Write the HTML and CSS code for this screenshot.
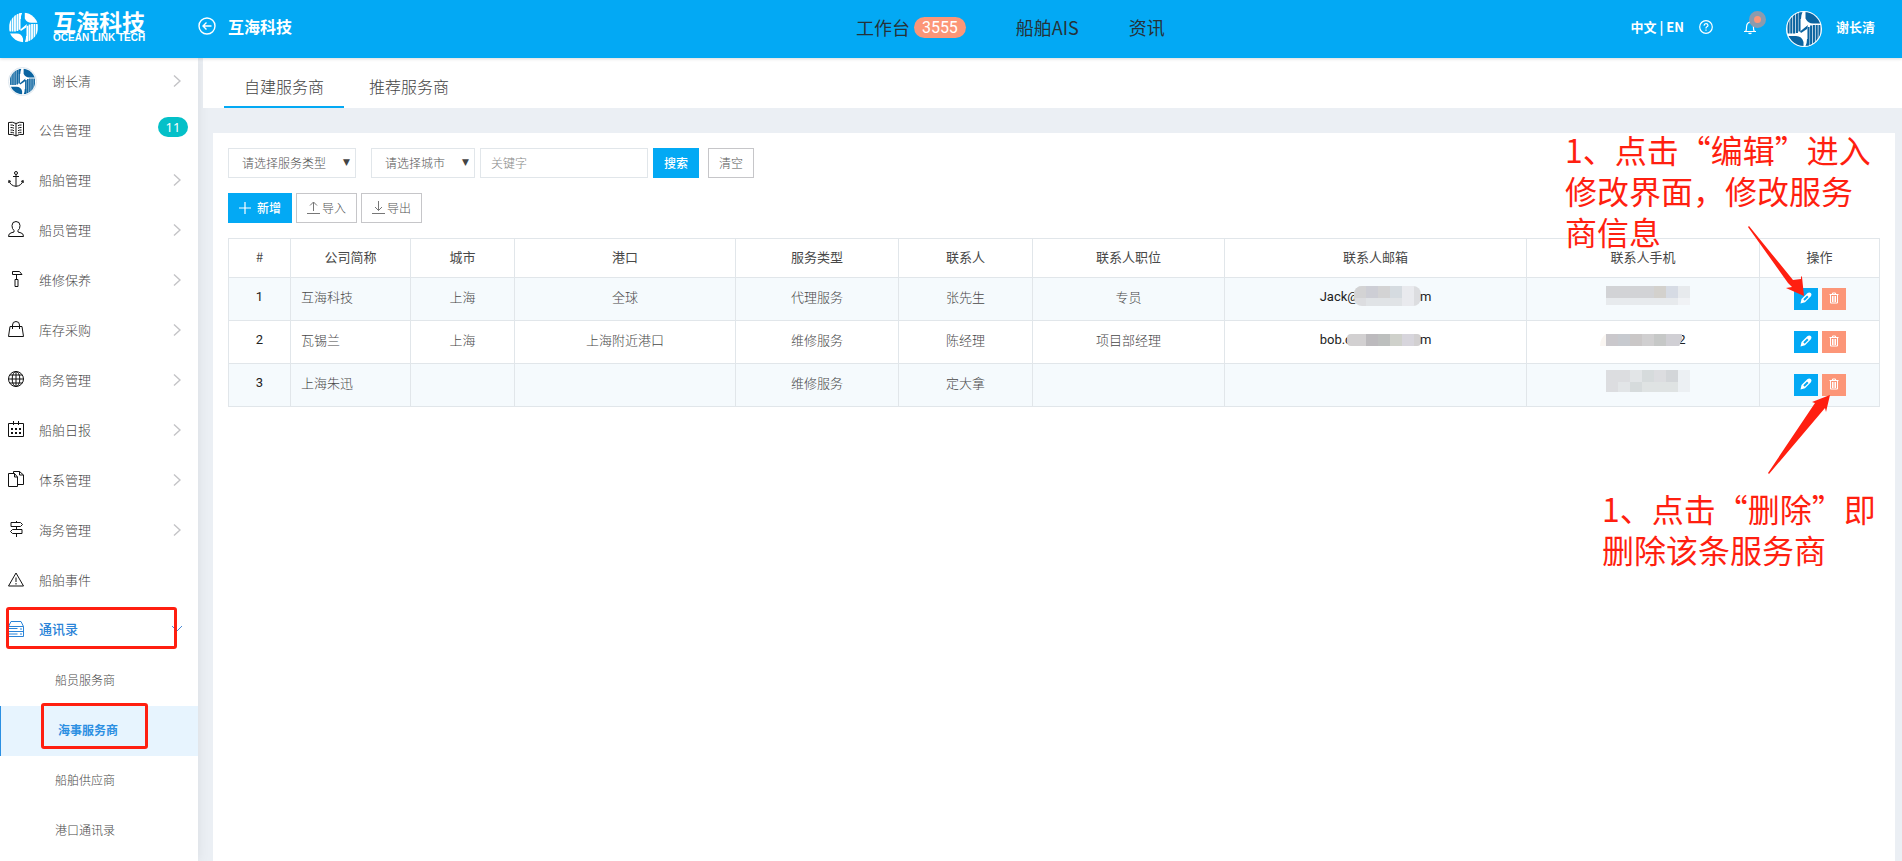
FILE: index.html
```html
<!DOCTYPE html>
<html lang="zh-CN">
<head>
<meta charset="utf-8">
<title>互海科技</title>
<link rel="stylesheet" href="styles.css">
</head>
<body>
<svg class="defs" aria-hidden="true">
  <defs>
    <clipPath id="disc"><circle cx="18" cy="18" r="17"/></clipPath>
    <symbol id="logo" viewBox="0 0 36 36">
      <g clip-path="url(#disc)">
        <path fill="currentColor" d="M19.500 0h17v12.500H27q-5 0-7.500-5zM0 25h10q6 0 7.500 6v5H0z"/>
        <path fill="none" stroke="currentColor" stroke-width="2.100" d="M2.500 8v14.500M5.300 5v17.500M8.100 3v19.500M10.900 2v20M13.500 1.500v19M33.500 14v14M30.700 14v17M27.900 14v19M25.100 14.500v20M22.500 16v19"/>
        <path fill="currentColor" d="M14 20.500l8-6.500-1 4-6 4zM13 1h3.500q-1.500 3-1.500 7h-2zM23 35h-3.500q1.500-3 1.500-7h2z"/>
      </g>
    </symbol>
    <symbol id="chev" viewBox="0 0 8 14"><path d="M1 1.500l6 5.500-6 5.500" fill="none" stroke="#c3c3c6" stroke-width="1.400"/></symbol>
    <symbol id="pencil" viewBox="0 0 12 12"><path fill="#fff" fill-rule="evenodd" d="M.5 11.500l1-4.500L7.300 1.200q2-1.500 3.400-.2t.2 3.200L5 10.300zM3.300 7.300l1.400 1.400L8.500 5 7.100 3.500z"/></symbol>
    <symbol id="trash" viewBox="0 0 12 12"><path fill="none" stroke="#fff" stroke-width="1" d="M1.500 2.500h9M4.500 2.500v-1.500h3v1.500M2.500 2.500v8.500h7v-8.500M4.500 4v6M6 4v6M7.500 4v6"/></symbol>
  </defs>
</svg>

<header class="topbar">
  <div class="brand">
    <svg class="brand-mark"><use href="#logo"/></svg>
    <div class="brand-words"><span class="brand-cn">互海科技</span><span class="brand-en">OCEAN LINK TECH</span></div>
  </div>
  <a class="back" href="#">
    <svg width="18" height="18" viewBox="0 0 18 18" fill="none" stroke="#fff" stroke-width="1.400"><circle cx="9" cy="9" r="8"/><path d="M13.500 9H5M8.500 5.500L5 9l3.500 3.500"/></svg>
    互海科技
  </a>
  <nav class="topnav">
    <a href="#">工作台<span class="count">3555</span></a>
    <a href="#">船舶AIS</a>
    <a href="#">资讯</a>
  </nav>
  <div class="account">
    <a class="lang" href="#">中文 | EN</a>
    <a class="help" href="#" aria-label="帮助"><svg width="14" height="14" viewBox="0 0 14 14" fill="none" stroke="#fff" stroke-width="1.200"><circle cx="7" cy="7" r="6.300"/><path d="M5 5.600q.2-2 2-2t2 1.700q0 1-1.100 1.500T7 8.500M7 9.600v1.200"/></svg></a>
    <a class="bell" href="#" aria-label="通知"><svg width="12" height="15" viewBox="0 0 12 15" fill="none" stroke="#fff" stroke-width="1.200"><path d="M0 11.500h12M1.700 11.300q.9-1 .9-5Q3 2.300 6 2.300t3.400 4q0 4 .9 5M6 1v1.300M4.500 13q1.500 1.300 3 0"/></svg><span class="pulse"></span></a>
    <svg class="avatar avatar-lg"><use href="#logo"/></svg>
    <span class="me">谢长清</span>
  </div>
</header>

<div class="shell">
  <aside class="side">
    <a class="item user" href="#"><svg class="avatar avatar-sm"><use href="#logo"/></svg><span>谢长清</span><svg class="chev"><use href="#chev"/></svg></a>
    <a class="item" href="#"><svg class="ico" viewBox="0 0 16 16"><path d="M8 2.500Q4.500.5.500 1.500v12q4-1 7.500 1.500 3.500-2.500 7.500-1.500v-12Q11.500.5 8 2.500zV15M2.500 4q2-.2 3.500.7M2.500 6.500q2-.2 3.500.7M2.500 9q2-.2 3.500.7M2.500 11.300q2-.2 3.500.7M13.500 4q-2-.2-3.500.7M13.500 6.500q-2-.2-3.500.7M13.500 9q-2-.2-3.500.7M13.500 11.300q-2-.2-3.500.7"/></svg><span>公告管理</span><b class="badge">11</b></a>
    <a class="item" href="#"><svg class="ico" viewBox="0 0 16 16"><circle cx="8" cy="2" r="1.500"/><path d="M8 3.500v12M5 5.500h6M.8 12V9.500l2.200 1M15.200 12V9.500l-2.200 1M1 9.800q1.500 5 7 5.500 5.500-.5 7-5.500"/></svg><span>船舶管理</span><svg class="chev"><use href="#chev"/></svg></a>
    <a class="item" href="#"><svg class="ico" viewBox="0 0 16 16"><path d="M.5 15.500h15q0-3-2.500-3.600l-3-.9V9.500q2-1.500 2-5Q12 .5 8 .5t-4 4q0 3.500 2 5V11l-3 .9Q.5 12.500.5 15.500z"/></svg><span>船员管理</span><svg class="chev"><use href="#chev"/></svg></a>
    <a class="item" href="#"><svg class="ico" viewBox="0 0 16 16"><path d="M4.500.5h7l2.500 3h-9.500zM8.500 3.500v4.500M7 8.500h3v7H7z"/></svg><span>维修保养</span><svg class="chev"><use href="#chev"/></svg></a>
    <a class="item" href="#"><svg class="ico" viewBox="0 0 16 16"><path d="M2 5.500h12l1.500 10H.5zM4.500 8V4q0-3.500 3.500-3.500T11.500 4v4"/></svg><span>库存采购</span><svg class="chev"><use href="#chev"/></svg></a>
    <a class="item" href="#"><svg class="ico" viewBox="0 0 16 16"><circle cx="8" cy="8" r="7.500"/><ellipse cx="8" cy="8" rx="3.800" ry="7.500"/><path d="M8 .5v15M.5 8h15M1.800 4h12.400M1.800 12h12.400"/></svg><span>商务管理</span><svg class="chev"><use href="#chev"/></svg></a>
    <a class="item" href="#"><svg class="ico" viewBox="0 0 16 16"><path d="M.5 2.500h15v13H.5zM5.500 0v4M10.500 0v4"/><path stroke-width="2" stroke-dasharray="2 2" d="M3 8h10M3 12h10"/></svg><span>船舶日报</span><svg class="chev"><use href="#chev"/></svg></a>
    <a class="item" href="#"><svg class="ico" viewBox="0 0 16 16"><path d="M.5 2.500h6L9.500 6v9.500h-9zM6.500 2.500V6h3M5.500 2.500V.5h6l4 3.500v9.500H10M11.500.5V4h4"/></svg><span>体系管理</span><svg class="chev"><use href="#chev"/></svg></a>
    <a class="item" href="#"><svg class="ico" viewBox="0 0 16 16"><path d="M3 1.500h9.500l2 2-2 2H3zM14 8.500H4.500l-2 2 2 2H14zM8.500 0v1.500M8.500 5.500v3M8.500 12.500V16"/></svg><span>海务管理</span><svg class="chev"><use href="#chev"/></svg></a>
    <a class="item" href="#"><svg class="ico" viewBox="0 0 16 16"><path d="M8 2l7.500 13H.5zM8 6.500v4.500M8 12v1.500"/></svg><span>船舶事件</span></a>
    <a class="item open" href="#"><svg class="ico" viewBox="0 0 16 16"><path d="M.5 5.500L3 .5h10l2.500 5v10H.5zM.5 5.500h15M.5 10.500h15M12 8h2M12 13h2M.5 7.500h9M.5 13h9"/></svg><span>通讯录</span><svg class="fold" viewBox="0 0 12 8"><path d="M1 1l5 5 5-5" fill="none" stroke="#4a8ad4"/></svg></a>
    <a class="sub" href="#">船员服务商</a>
    <a class="sub current" href="#"><span>海事服务商</span></a>
    <a class="sub" href="#">船舶供应商</a>
    <a class="sub" href="#">港口通讯录</a>
  </aside>

  <main class="main">
    <nav class="tabs">
      <a class="tab active" href="#">自建服务商</a>
      <a class="tab" href="#">推荐服务商</a>
    </nav>
    <section class="card">
      <form class="filters">
        <span class="pick pick-type"><select aria-label="服务类型"><option>请选择服务类型</option></select></span>
        <span class="pick pick-city"><select aria-label="城市"><option>请选择城市</option></select></span>
        <input class="keyword" type="text" placeholder="关键字" aria-label="关键字">
        <button class="btn primary search" type="button">搜索</button>
        <button class="btn clear" type="button">清空</button>
      </form>
      <div class="actions">
        <button class="btn primary" type="button"><svg width="12" height="12" viewBox="0 0 12 12" stroke="#fff" stroke-width="1.200"><path d="M6 0v12M0 6h12"/></svg>新增</button>
        <button class="btn tight" type="button"><svg width="13" height="13" viewBox="0 0 13 13" fill="none" stroke="#777"><path d="M6.500 10V1M3 4.500L6.500 1 10 4.500M0 12.500h13"/></svg>导入</button>
        <button class="btn tight" type="button"><svg width="13" height="13" viewBox="0 0 13 13" fill="none" stroke="#777"><path d="M6.500 0v9.500M3 6l3.500 3.500L10 6M0 12.500h13"/></svg>导出</button>
      </div>
      <table class="grid">
        <colgroup><col class="w62"><col class="w120"><col class="w104"><col class="w221"><col class="w163"><col class="w134"><col class="w192"><col class="w302"><col class="w233"><col class="w120"></colgroup>
        <thead><tr><th>#</th><th>公司简称</th><th>城市</th><th>港口</th><th>服务类型</th><th>联系人</th><th>联系人职位</th><th>联系人邮箱</th><th>联系人手机</th><th>操作</th></tr></thead>
        <tbody>
          <tr><td class="dark">1</td><td class="name">互海科技</td><td>上海</td><td>全球</td><td>代理服务</td><td>张先生</td><td>专员</td>
            <td class="dark"><span class="masked">Jack@<svg class="mask" width="67" height="21" viewBox="0 0 67 21"><clipPath id="m1"><rect width="67" height="20" rx="8"/></clipPath><g clip-path="url(#m1)"><path fill="#dcdde0" d="M0 0h67v21H0z"/><path fill="#cdced5" d="M12 0h12v12H12z"/><path fill="#d3d3d4" d="M0 0h12v12H0zM24 0h12v12H24z"/><path fill="#d5dbe0" d="M36 0h12v12H36z"/><path fill="#e9eaee" d="M48 0h12v21H48z"/><path fill="#e0e3e6" d="M12 12h36v9H12z"/></g></svg>m</span></td>
            <td class="shade"><svg class="mask" width="84" height="20" viewBox="0 0 84 20"><path fill="#d2d3d6" d="M0 0h48v12H0z"/><path fill="#d3d1cd" d="M48 0h12v12H48z"/><path fill="#d6dbe4" d="M60 0h12v12H60z"/><path fill="#e7eaed" d="M72 0h12v12H72zM0 12h72v7H0z"/><path fill="#f0f2f5" d="M72 12h12v7H72z"/></svg></td>
            <td class="ops"><button class="op edit" type="button" aria-label="编辑"><svg width="12" height="12"><use href="#pencil"/></svg></button><button class="op del" type="button" aria-label="删除"><svg width="12" height="12"><use href="#trash"/></svg></button></td></tr>
          <tr><td class="dark">2</td><td class="name">瓦锡兰</td><td>上海</td><td>上海附近港口</td><td>维修服务</td><td>陈经理</td><td>项目部经理</td>
            <td class="dark"><span class="masked">bob.c<svg class="mask" width="74" height="12" viewBox="0 0 74 12"><clipPath id="m2"><rect width="74" height="12" rx="4"/></clipPath><g clip-path="url(#m2)"><path fill="#d2d0d1" d="M0 0h74v12H0z"/><path fill="#bcbabd" d="M19 0h12v12H19z"/><path fill="#bdbfbe" d="M31 0h12v12H31z"/><path fill="#cfd1cb" d="M43 0h12v12H43z"/><path fill="#d7d5dc" d="M55 0h12v12H55z"/></g></svg>m</span></td>
            <td class="dark"><span class="masked phone"><svg class="mask" width="82" height="12" viewBox="0 0 82 12"><path fill="#faf6f2" d="M6 0q-6 4-6 12h6z"/><path fill="#cac8cc" d="M6 0h76v5l-3 7H6z"/><path fill="#c7cacf" d="M18 0h12v12H18z"/><path fill="#cac7c7" d="M30 0h12v12H30z"/><path fill="#d0cfd0" d="M42 0h12v12H42z"/><path fill="#c6c8c7" d="M54 0h12v12H54z"/><path fill="#d0cfd4" d="M66 0h16v5l-3 7H66z"/></svg>2</span></td>
            <td class="ops"><button class="op edit" type="button" aria-label="编辑"><svg width="12" height="12"><use href="#pencil"/></svg></button><button class="op del" type="button" aria-label="删除"><svg width="12" height="12"><use href="#trash"/></svg></button></td></tr>
          <tr><td class="dark">3</td><td class="name">上海朱迅</td><td></td><td></td><td>维修服务</td><td>定大拿</td><td></td><td></td>
            <td class="shade"><svg class="mask" width="84" height="22" viewBox="0 0 84 22"><path fill="#dcdde0" d="M0 0h84v22H0z"/><path fill="#e2e5e7" d="M24 0h12v12H24zM12 12h12v10H12z"/><path fill="#d6dbdc" d="M36 0h12v12H36zM24 12h12v10H24z"/><path fill="#d3d6d9" d="M60 0h12v12H60z"/><path fill="#dfe3e3" d="M36 12h36v10H36z"/><path fill="#ecf0f3" d="M72 0h12v22H72z"/></svg></td>
            <td class="ops"><button class="op edit" type="button" aria-label="编辑"><svg width="12" height="12"><use href="#pencil"/></svg></button><button class="op del" type="button" aria-label="删除"><svg width="12" height="12"><use href="#trash"/></svg></button></td></tr>
        </tbody>
      </table>
    </section>
  </main>
</div>

<div class="frame frame-menu"></div>
<div class="frame frame-sub"></div>
<p class="note note-edit">1、点击“编辑”进入<br>修改界面，修改服务<br>商信息</p>
<p class="note note-del">1、点击“删除”即<br>删除该条服务商</p>
<svg class="arrow arrow-edit" width="60" height="74" viewBox="0 0 60 74"><path fill="#ff1f10" d="M2 1L46 55l8-1 0-3 1 1 2 19-18-8 6-1-4-4L1 2z"/></svg>
<svg class="arrow arrow-del" width="66" height="80" viewBox="0 0 66 80"><path fill="#ff1f10" d="M1 78L48 8l-3-1 18-7-4 17-1-4L2 79z"/></svg>
</body>
</html>
```
FILE: styles.css
```css
* { box-sizing: border-box; }
body {
  margin: 0;
  min-height: 100vh;
  display: flex;
  flex-direction: column;
  position: relative;
  overflow-x: hidden;
  background: #ebeff4;
  color: #484848;
  font: 300 13px/20px "Noto Sans CJK SC", sans-serif;
}
a { color: inherit; text-decoration: none; }
svg { flex: none; display: block; }
button, input, select { font: inherit; border-radius: 0; }
.defs { position: absolute; width: 0; height: 0; }

.topbar {
  display: flex;
  align-items: center;
  height: 58px;
  background: #03a9f4;
  color: #fff;
  box-shadow: 0 1px 3px rgba(0, 0, 0, .15);
  position: relative;
  z-index: 1;
}
.brand { display: flex; align-items: center; gap: 14px; width: 198px; padding: 0 0 4px 8px; }
.brand-mark { width: 31px; height: 31px; }
.brand-words { display: flex; flex-direction: column; }
.brand-cn { font-size: 23px; line-height: 22px; font-weight: 700; }
.brand-en { font: bold 10px/12px "Liberation Sans", Arial, sans-serif; white-space: nowrap; }
.back { display: flex; align-items: center; gap: 12px; padding-bottom: 6px; font-size: 16px; font-weight: 700; line-height: 24px; }
.topnav { display: flex; gap: 50px; position: absolute; left: 45%; padding-bottom: 4px; color: #263238; font-size: 18px; line-height: 26px; font-weight: 400; }
.topnav a { display: flex; align-items: center; }
.count { margin-left: 4px; padding: 0 8px; border-radius: 11px; background: #fc9678; color: #fff; font: 400 16px/21px Roboto, sans-serif; }
.account { margin-left: auto; display: flex; align-items: center; padding: 0 27px 4px 0; font-weight: 700; }
.help { margin-left: 15px; }
.bell { margin-left: 31px; position: relative; }
.pulse { position: absolute; left: 5px; top: -9px; width: 17px; height: 17px; border: 5px solid #8b9bae; border-radius: 50%; background: #fc9678; }
.avatar { background: #fff; border-radius: 50%; color: #0b64a0; }
.avatar-lg { width: 36px; height: 36px; margin: 4px 14px 0 30px; }
.avatar-sm { width: 29px; height: 29px; border: 1px solid #dce6ee; }

.shell { flex: 1; display: flex; }
.side { width: 198px; flex: none; background: #fff; box-shadow: 0 0 12px rgba(0, 0, 0, .08); }
.item { display: flex; align-items: center; height: 50px; padding: 0 17px 2px 8px; }
.item.user { height: 48px; }
.ico { width: 16px; height: 16px; margin-bottom: 2px; fill: none; stroke: #111; stroke-width: 1; }
.item span { margin-left: 15px; flex: 1; }
.chev { width: 8px; height: 14px; }
.badge { width: 30px; height: 20px; margin: -6px -7px 0 0; border-radius: 10px; background: #04c0c8; color: #fff; font: 400 13px/20px "Noto Sans", sans-serif; text-align: center; }
.open { color: #2b84d8; font-weight: 500; padding-right: 15px; padding-bottom: 4px; }
.open .ico { stroke: #2b84d8; margin: 0; }
.fold { width: 12px; height: 8px; }
.sub { display: flex; align-items: center; height: 50px; padding: 0 0 2px 55px; font-size: 12px; }
.current { background: #e7f4fe; border-left: 1px solid #2b8fe2; padding-left: 57px; color: #2b8fe2; font-weight: 700; }

.main { flex: 1; min-width: 0; padding-left: 5px; display: flex; flex-direction: column; }
.tabs { display: flex; gap: 5px; height: 50px; padding-left: 21px; background: #fff; }
.tab { padding: 14px 20px 0; font-size: 16px; line-height: 28px; color: #444; }
.tab.active { border-bottom: 2px solid #03a9f4; }
.card { flex: 1; margin: 25px 7px 0 10px; padding: 15px; background: #fff; }
.filters { display: flex; margin-bottom: 15px; font-size: 12px; }
.pick { position: relative; height: 30px; }
.pick-type { width: 128px; margin-right: 15px; }
.pick-city { width: 104px; margin-right: 5px; }
.pick::after { content: "▼"; position: absolute; right: 6px; top: 4px; font: 9px/20px "DejaVu Sans", sans-serif; color: #444; pointer-events: none; }
.pick select { appearance: none; width: 100%; height: 30px; padding: 0 13px 1px; border: 1px solid #e1e6ea; background: #fff; color: #555; }
.keyword { width: 168px; height: 30px; padding: 0 10px 2px; border: 1px solid #e1e6ea; margin-right: 5px; }
.keyword::placeholder { color: #888; }
.btn { display: flex; align-items: center; justify-content: center; gap: 6px; height: 30px; padding: 0 10px 1px; border: 1px solid #c6c6c9; background: #fff; color: #555; font-size: 12px; line-height: 20px; white-space: nowrap; }
.btn.primary { border-color: #03a9f4; background: #03a9f4; color: #fff; font-weight: 500; }
.btn.tight { gap: 2px; }
.search { margin-right: 9px; }
.actions { display: flex; gap: 4px; margin-bottom: 15px; }

.grid { width: 100%; table-layout: fixed; border-collapse: collapse; }
.w62 { width: 62px; } .w104 { width: 104px; } .w120 { width: 120px; } .w134 { width: 134px; }
.w163 { width: 163px; } .w192 { width: 192px; } .w221 { width: 221px; } .w233 { width: 233px; } .w302 { width: 302px; }
.grid th, .grid td { border: 1px solid #e1e6ea; padding: 0 10px 5px; text-align: center; font-weight: 300; }
.grid th { height: 39px; padding-bottom: 3px; font-weight: 400; }
.grid td { height: 43px; }
.grid tbody tr:nth-child(odd) { background: #f5fafd; }
.grid td.name { text-align: left; }
.grid td.dark { color: #222; font-family: Roboto, sans-serif; font-weight: 400; }
.grid td.shade { padding: 0 0 8px 10px; }
.grid td.ops { padding: 0; }
.mask { display: inline-block; vertical-align: middle; }
.masked { display: inline-flex; align-items: center; vertical-align: middle; }
.masked .mask { margin: 0 -1px 0 -5px; }
.masked.phone .mask { margin: 0 -4px 0 0; position: relative; }
.op { width: 24px; height: 22px; padding: 0 0 2px; border: 0; display: inline-grid; place-items: center; vertical-align: middle; }
.edit { background: #03a9f4; margin-right: 4px; }
.del { background: #fc9678; }

.frame { position: absolute; border: 3px solid #ff1f10; border-radius: 3px; }
.frame-menu { left: 6px; top: 607px; width: 171px; height: 42px; }
.frame-sub { left: 41px; top: 703px; width: 107px; height: 46px; }
.note { position: absolute; margin: 0; color: #ff1f10; font-size: 32px; line-height: 41px; font-weight: 400; white-space: nowrap; z-index: 2; }
.note-edit { left: 1565px; top: 129px; }
.note-del { left: 1602px; top: 488px; }
.arrow { position: absolute; z-index: 2; }
.arrow-edit { left: 1747px; top: 225px; }
.arrow-del { left: 1767px; top: 395px; }
```
